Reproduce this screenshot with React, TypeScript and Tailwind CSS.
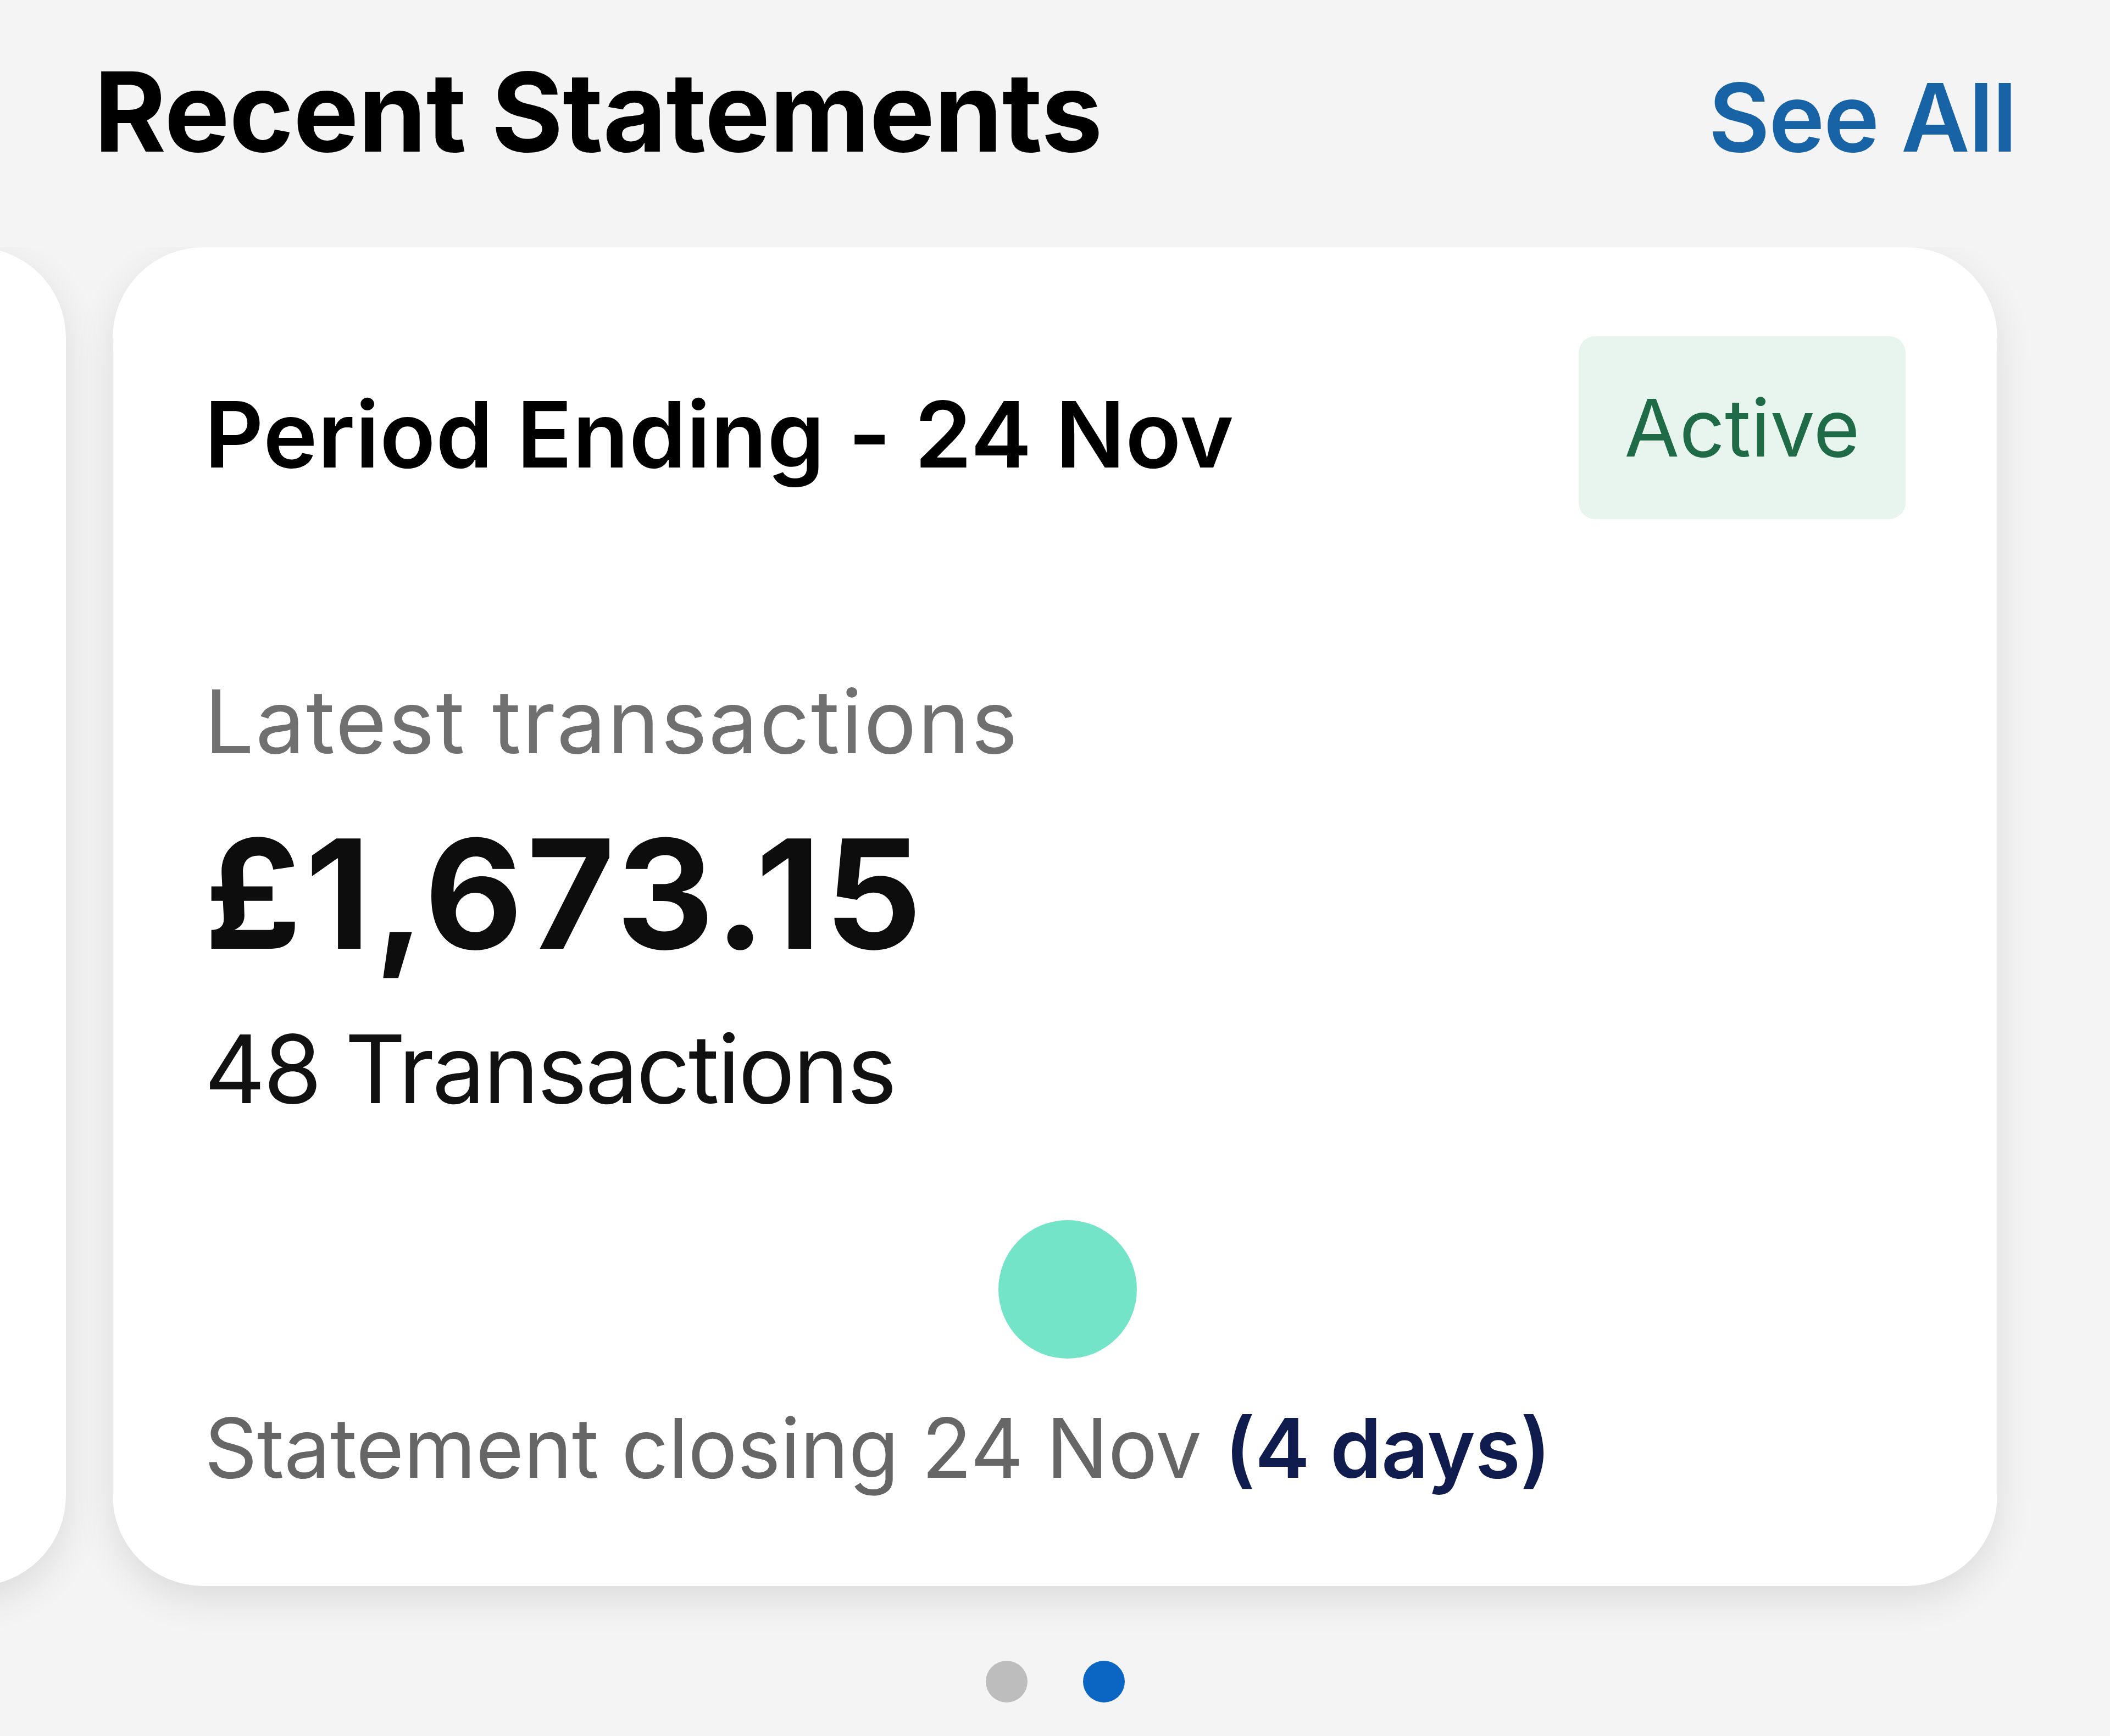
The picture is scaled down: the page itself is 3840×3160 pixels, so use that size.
const font = "font-['Inter','Liberation_Sans',sans-serif]";

function Dots({ count, active }: { count: number; active: number }) {
  return (
    <div className="flex justify-center gap-[101px]">
      {Array.from({ length: count }, (_, i) => (
        <span
          key={i}
          className={`h-[76px] w-[76px] rounded-full ${i === active ? "bg-[#0b66c3]" : "bg-[#bdbdbd]"}`}
        />
      ))}
    </div>
  );
}

function StatementCard() {
  return (
    <div className="flex w-[3430px] shrink-0 flex-col rounded-[165px] bg-white px-[167px] pb-[171px] pt-[162px] shadow-[0_24px_70px_rgba(0,0,0,0.1)]">
      <div className="flex items-start justify-between">
        <p className="mt-[95px] text-[167px] font-semibold leading-none tracking-[0.5px] text-black">Period Ending - 24 Nov</p>
        <span className="flex h-[333px] w-[595px] items-center justify-center rounded-[30px] bg-[#e7f5ee] text-[145px] leading-none text-[#1f6b47]">
          Active
        </span>
      </div>
      <p className="mt-[288px] text-[160px] leading-none tracking-[2.5px] text-[#707070]">Latest transactions</p>
      <p className="mt-[96px] text-[276px] font-bold leading-none tracking-[7px] text-[#0d0d0d]">£1,673.15</p>
      <p className="mt-[94px] text-[172px] leading-none tracking-[-3.5px] text-[#111]">48 Transactions</p>
      <div className="mt-[190px] flex justify-center">
        <span className="ml-[46px] h-[252px] w-[252px] rounded-full bg-[#74e4c9]" />
      </div>
      <p className="mt-[88px] text-[150px] leading-none tracking-[-0.5px] text-[#666]">
        Statement closing 24 Nov <span className="font-semibold text-[#0f1c4d]">(4 days)</span>
      </p>
    </div>
  );
}

export default function App() {
  return (
    <div className={`h-[3160px] w-[3840px] overflow-hidden bg-[#f4f4f4] ${font}`}>
      <div className="flex items-baseline justify-between px-[171px] pt-[103px]">
        <h2 className="text-[200px] font-bold leading-none tracking-[-1px] text-black">Recent Statements</h2>
        <button type="button" className="text-[172px] font-semibold leading-none tracking-[-2px] text-[#1763a6]">
          See All
        </button>
      </div>
      <div className="mt-[147px] overflow-hidden pb-[136px]">
        <div className="-ml-[3310px] flex gap-[85px]">
          <div className="h-[2437px] w-[3430px] shrink-0 rounded-[165px] bg-white shadow-[0_24px_70px_rgba(0,0,0,0.1)]" />
          <StatementCard />
        </div>
      </div>
      <Dots count={2} active={1} />
    </div>
  );
}
